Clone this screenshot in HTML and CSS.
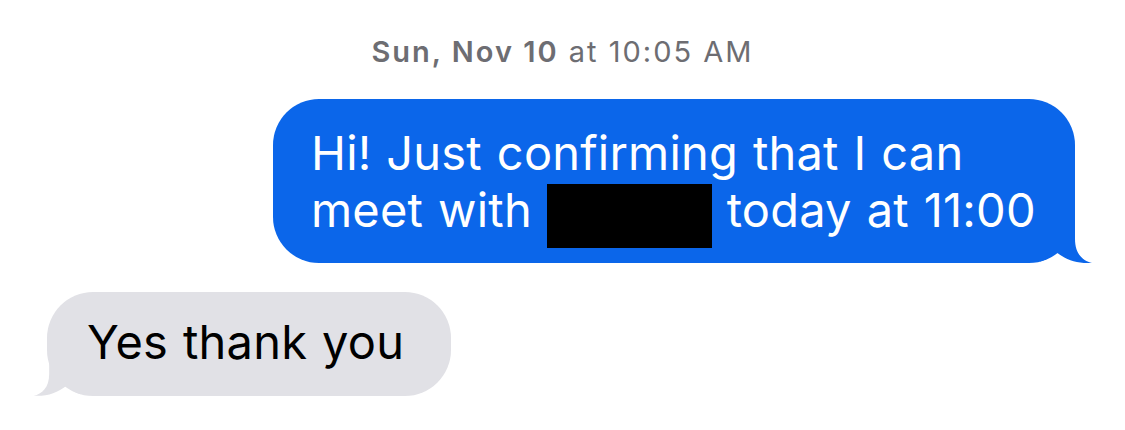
FILE: index.html
```html
<!DOCTYPE html>
<html lang="en">
<head>
<meta charset="utf-8">
<title>Messages</title>
<link rel="stylesheet" href="styles.css">
</head>
<body>
<main class="thread">
  <div class="timestamp"><strong>Sun, Nov 10</strong> at 10:05 AM</div>
  <div class="row row-out">
    <div class="bubble bubble-out">Hi! Just confirming that I can meet with <span class="redacted"></span> today at 11:00<svg class="tail tail-out" viewBox="0 0 55 50" aria-hidden="true"><path d="M0,48.5 L0,0 L35,0 L35,26 C35,41 43,48 52,50 C38,51 26,47 16,39 C10,44 5,47.5 0,48.5 Z"/></svg></div>
  </div>
  <div class="row row-in">
    <div class="bubble bubble-in">Yes thank you<svg class="tail tail-in" viewBox="0 0 55 50" aria-hidden="true"><path d="M0,48.5 L0,0 L35,0 L35,26 C35,41 43,48 52,50 C38,51 26,47 16,39 C10,44 5,47.5 0,48.5 Z"/></svg></div>
  </div>
</main>
</body>
</html>
```
FILE: styles.css
```css
html, body {
  margin: 0;
  padding: 0;
  background: #ffffff;
}

body {
  font-family: Inter, "Liberation Sans", sans-serif;
  width: 1125px;
  height: 430px;
  overflow: hidden;
}

.thread {
  display: flex;
  flex-direction: column;
}

.timestamp {
  margin-top: 36px;
  text-align: center;
  font-size: 29px;
  line-height: 32px;
  letter-spacing: 2px;
  color: #6d6d72;
}

.timestamp strong {
  font-weight: 600;
}

.row {
  display: flex;
}

.row-out {
  justify-content: flex-end;
  padding-right: 50px;
  margin-top: 31px;
}

.row-in {
  justify-content: flex-start;
  padding-left: 47px;
  margin-top: 29px;
}

.bubble {
  position: relative;
  box-sizing: border-box;
  font-size: 47px;
  line-height: 57px;
  letter-spacing: 0.2px;
  border-radius: 46px;
}

.bubble-out {
  max-width: 802px;
  padding: 25px 38px 25px 38px;
  word-spacing: 1.5px;
  background: #0b66ea;
  color: #ffffff;
}

.bubble-in {
  padding: 21px 47px 26px 40px;
  word-spacing: 1.5px;
  background: #e1e1e6;
  color: #000000;
}

.redacted {
  display: inline-block;
  width: 165px;
  height: 64px;
  margin: -10px 0;
  background: #000000;
  vertical-align: -11px;
}

.tail {
  position: absolute;
  bottom: 0;
  width: 55px;
  height: 50px;
}

.tail-out {
  right: -20px;
  fill: #0b66ea;
}

.tail-in {
  left: -16px;
  width: 50px;
  height: 46px;
  transform: scaleX(-1);
  fill: #e1e1e6;
}
```
